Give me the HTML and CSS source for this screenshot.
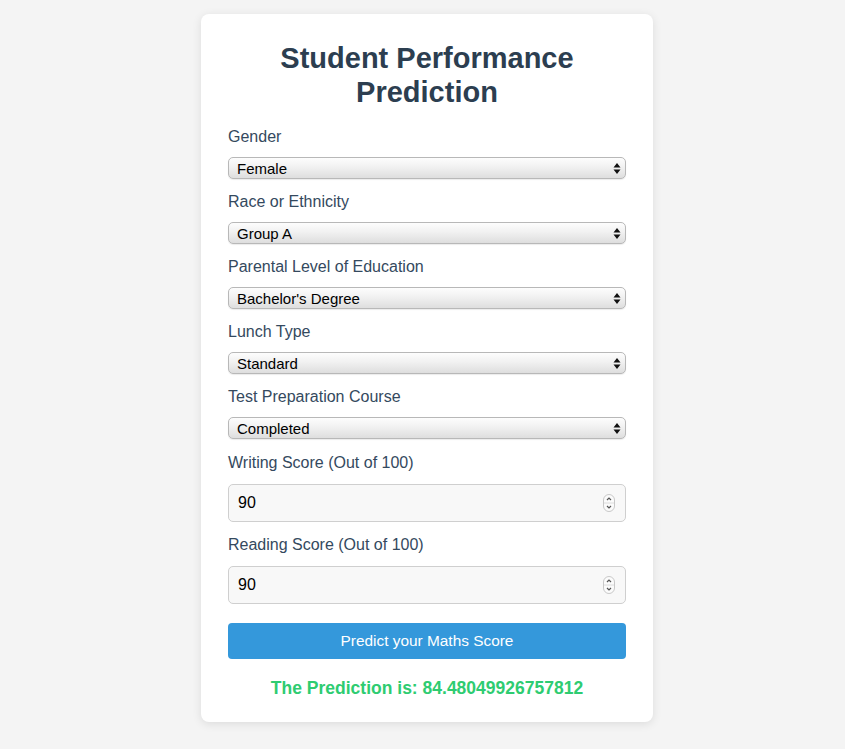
FILE: index.html
```html
<!DOCTYPE html>
<html lang="en">
<head>
<meta charset="utf-8">
<title>Student Performance Prediction</title>
<link rel="stylesheet" href="styles.css">
</head>
<body>
<div class="card">
  <h1 class="title">Student Performance Prediction</h1>
  <form class="form">
    <div class="group">
      <label class="label">Gender</label>
      <div class="select-wrap">
        <select class="select"><option>Female</option><option>Male</option></select>
        <svg class="select-arrow" width="8" height="13" viewBox="0 0 8 13"><path d="M4 1 L7.5 5.5 L0.5 5.5 Z M4 12 L7.5 7.5 L0.5 7.5 Z" fill="#111"/></svg>
      </div>
    </div>
    <div class="group">
      <label class="label">Race or Ethnicity</label>
      <div class="select-wrap">
        <select class="select"><option>Group A</option></select>
        <svg class="select-arrow" width="8" height="13" viewBox="0 0 8 13"><path d="M4 1 L7.5 5.5 L0.5 5.5 Z M4 12 L7.5 7.5 L0.5 7.5 Z" fill="#111"/></svg>
      </div>
    </div>
    <div class="group">
      <label class="label">Parental Level of Education</label>
      <div class="select-wrap">
        <select class="select"><option>Bachelor's Degree</option></select>
        <svg class="select-arrow" width="8" height="13" viewBox="0 0 8 13"><path d="M4 1 L7.5 5.5 L0.5 5.5 Z M4 12 L7.5 7.5 L0.5 7.5 Z" fill="#111"/></svg>
      </div>
    </div>
    <div class="group">
      <label class="label">Lunch Type</label>
      <div class="select-wrap">
        <select class="select"><option>Standard</option></select>
        <svg class="select-arrow" width="8" height="13" viewBox="0 0 8 13"><path d="M4 1 L7.5 5.5 L0.5 5.5 Z M4 12 L7.5 7.5 L0.5 7.5 Z" fill="#111"/></svg>
      </div>
    </div>
    <div class="group group-last-select">
      <label class="label">Test Preparation Course</label>
      <div class="select-wrap">
        <select class="select"><option>Completed</option></select>
        <svg class="select-arrow" width="8" height="13" viewBox="0 0 8 13"><path d="M4 1 L7.5 5.5 L0.5 5.5 Z M4 12 L7.5 7.5 L0.5 7.5 Z" fill="#111"/></svg>
      </div>
    </div>
    <div class="group group-input">
      <label class="label">Writing Score (Out of 100)</label>
      <div class="input-wrap">
        <input class="input" type="number" value="90">
        <svg class="spin" width="12" height="18" viewBox="0 0 12 18"><rect x="0.5" y="0.5" width="11" height="17" rx="5.5" fill="#fbfbfb" stroke="#c8c8c8"/><line x1="1" y1="9" x2="11" y2="9" stroke="#dcdcdc"/><path d="M4 6 L6 4 L8 6" fill="none" stroke="#555" stroke-width="1.2"/><path d="M4 12 L6 14 L8 12" fill="none" stroke="#555" stroke-width="1.2"/></svg>
      </div>
    </div>
    <div class="group group-input group-last">
      <label class="label">Reading Score (Out of 100)</label>
      <div class="input-wrap">
        <input class="input" type="number" value="90">
        <svg class="spin" width="12" height="18" viewBox="0 0 12 18"><rect x="0.5" y="0.5" width="11" height="17" rx="5.5" fill="#fbfbfb" stroke="#c8c8c8"/><line x1="1" y1="9" x2="11" y2="9" stroke="#dcdcdc"/><path d="M4 6 L6 4 L8 6" fill="none" stroke="#555" stroke-width="1.2"/><path d="M4 12 L6 14 L8 12" fill="none" stroke="#555" stroke-width="1.2"/></svg>
      </div>
    </div>
    <button class="button" type="button">Predict your Maths Score</button>
  </form>
  <p class="result">The Prediction is: 84.48049926757812</p>
</div>
</body>
</html>
```
FILE: styles.css
```css
* { box-sizing: border-box; }
html, body { margin: 0; padding: 0; }
body {
  background: #f4f4f4;
  font-family: "Liberation Sans", Arial, Helvetica, sans-serif;
  display: flex;
  justify-content: center;
  padding-top: 14px;
  padding-left: 9px;
  min-height: 749px;
}
.card {
  width: 452px;
  height: 708px;
  background: #fff;
  border-radius: 8px;
  box-shadow: 0 2px 10px rgba(0,0,0,0.1);
  padding: 27px 27px 23px 27px;
  display: flex;
  flex-direction: column;
}
.title {
  margin: 0 0 18px 0;
  font-size: 29px;
  line-height: 34px;
  font-weight: bold;
  text-align: center;
  color: #2c3e50;
}
.form { display: flex; flex-direction: column; }
.group { margin-bottom: 13px; }
.group-last-select { margin-bottom: 14px; }
.group-input { margin-bottom: 13px; }
.group-input .label { margin-bottom: 12px; }
.group-last { margin-bottom: 19px; }
.label {
  display: block;
  font-size: 16px;
  line-height: 19px;
  color: #34495e;
  margin-bottom: 11px;
}
.select-wrap, .input-wrap { position: relative; }
.select {
  -webkit-appearance: none;
  appearance: none;
  width: 100%;
  height: 22px;
  margin: 0;
  padding: 0 20px 0 8px;
  font-family: "Liberation Sans", Arial, sans-serif;
  font-size: 15px;
  color: #000;
  border: 1px solid #b8b8b8;
  border-radius: 5px;
  background: linear-gradient(#fdfdfd 0%, #f1f1f1 45%, #dedede 100%);
  box-shadow: 0 1px 1px rgba(0,0,0,0.08);
}
.select-arrow {
  position: absolute;
  right: 5px;
  top: 5px;
  pointer-events: none;
}
.input {
  width: 100%;
  height: 38px;
  margin: 0;
  padding: 0 9px;
  font-family: "Liberation Sans", Arial, sans-serif;
  font-size: 16px;
  color: #000;
  background: #f8f8f8;
  border: 1px solid #cfcfcf;
  border-radius: 5px;
  -moz-appearance: textfield;
}
.input::-webkit-inner-spin-button,
.input::-webkit-outer-spin-button { -webkit-appearance: none; margin: 0; }
.spin {
  position: absolute;
  right: 11px;
  top: 10px;
  pointer-events: none;
}
.button {
  width: 100%;
  height: 36px;
  border: none;
  border-radius: 4px;
  background: #3498db;
  color: #fff;
  font-family: "Liberation Sans", Arial, sans-serif;
  font-size: 15.4px;
  padding: 0;
}
.result {
  margin: 18px 0 0 0;
  text-align: center;
  font-size: 17.5px;
  line-height: 22px;
  font-weight: bold;
  color: #2ecc71;
}
```
